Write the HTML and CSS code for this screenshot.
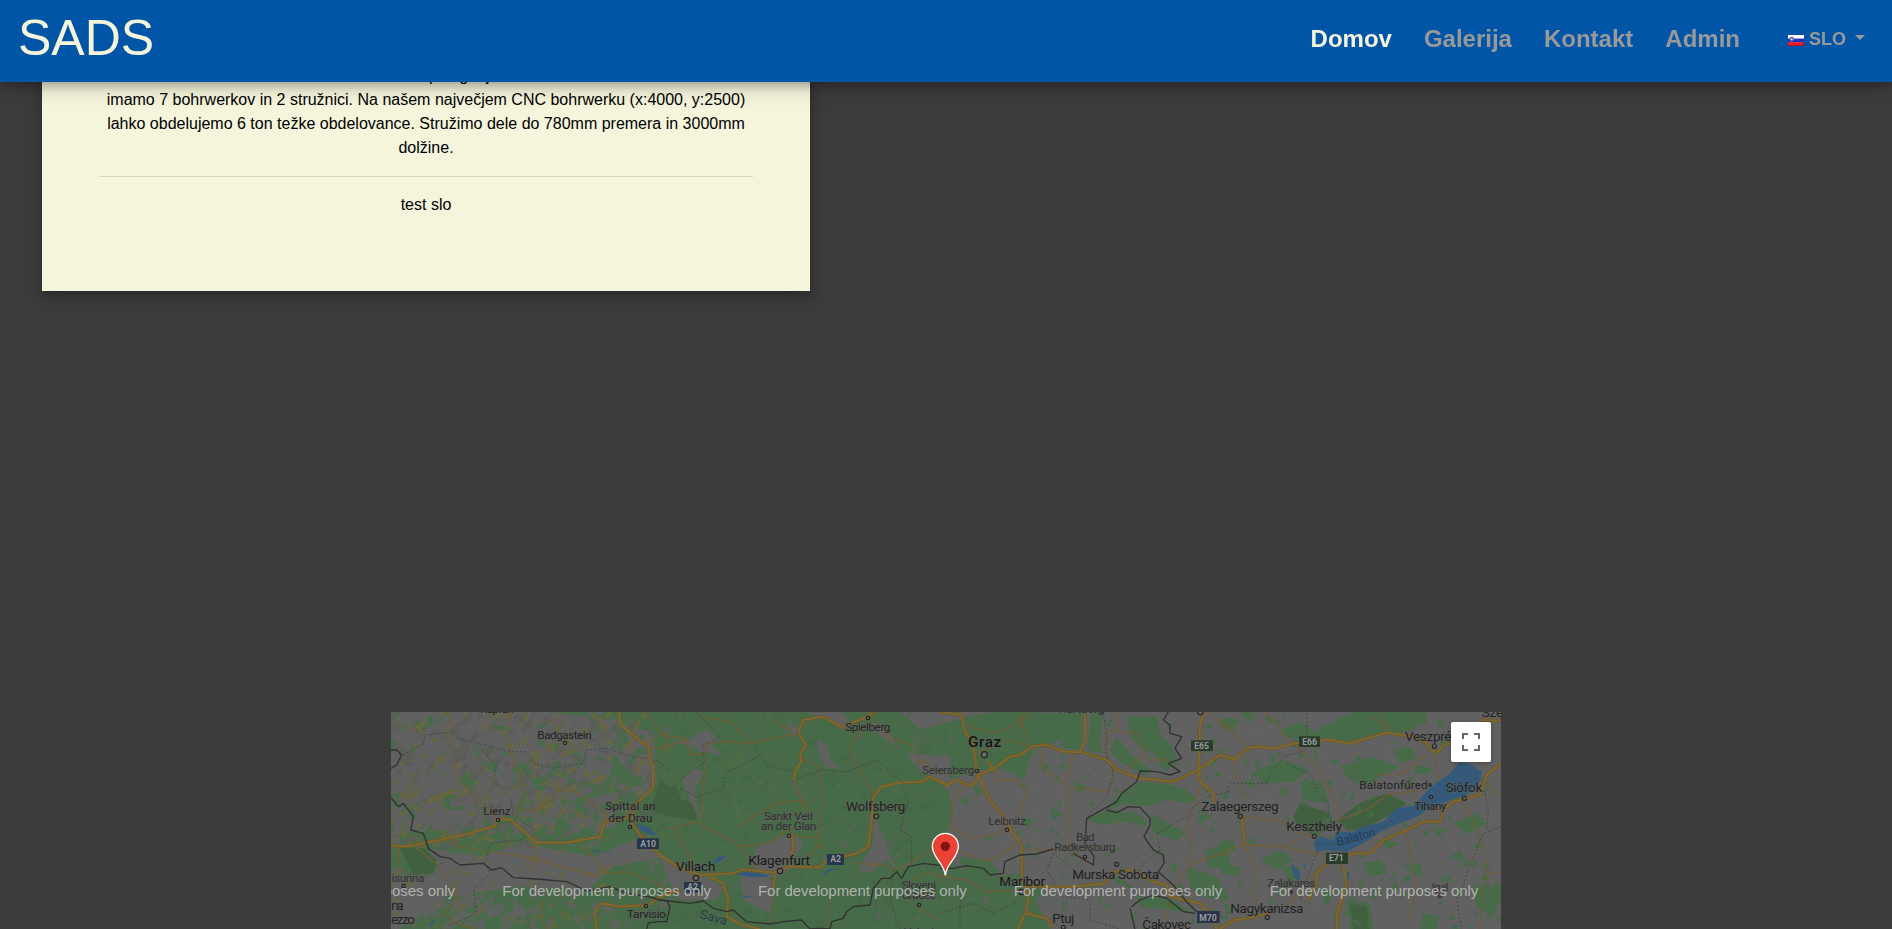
FILE: index.html
```html
<!DOCTYPE html>
<html lang="sl">
<head>
<meta charset="utf-8">
<title>SADS</title>
<link rel="stylesheet" href="styles.css">
</head>
<body>
<header class="navbar">
  <a class="brand">SADS</a>
  <nav class="nav">
    <a class="nav-link active">Domov</a>
    <a class="nav-link">Galerija</a>
    <a class="nav-link">Kontakt</a>
    <a class="nav-link">Admin</a>
    <a class="lang">
      <svg class="flag" width="16" height="11" viewBox="0 0 16 11"><rect width="16" height="11" fill="#fff"/><rect y="3.6" width="16" height="4" fill="#2230b8"/><rect y="7.3" width="16" height="3.7" fill="#f01818"/><path d="M0 10.5h16M15.5 7.5v3" stroke="#a01040" fill="none"/><path d="M2 2h3.4v2.6q-.4 1.3-1.7 1.7q-1.3-.4-1.7-1.7z" fill="#5560c8" stroke="#c08aa8" stroke-width=".5"/><path d="M2.6 5l1.1-1.5L4.8 5z" fill="#fff"/></svg>
      <span>SLO</span><i class="caret"></i>
    </a>
  </nav>
</header>
<main class="page">
  <section class="card">
    <p>Za stranke imamo na razpolaganje velike in nove<br>imamo 7 bohrwerkov in 2 stružnici. Na našem največjem CNC bohrwerku (x:4000, y:2500)<br>lahko obdelujemo 6 ton težke obdelovance. Stružimo dele do 780mm premera in 3000mm<br>dolžine.</p>
    <hr>
    <p>test slo</p>
  </section>
  <section class="map">
    <svg class="map-canvas" viewBox="33 36 3330 651">
      <rect class="land" x="33" y="36" width="3330" height="651"/>
      <g class="forest">
        <path d="M500 36H1560L1620 90L1760 50L1850 36H1980L2060 70L2040 120L1960 150L1930 240L1850 200L1700 240L1720 330L1690 470L1800 550L1960 590L2010 687H60L200 590L420 560L620 570L700 500L860 470L760 420L640 470L420 430L300 470L60 430L60 400L330 380L420 310L540 280L640 240L780 290L830 250L820 100L700 60Z"/>
        <path d="M33 280L140 275L240 265L330 310L240 330L40 320ZM110 205L260 210L290 270L160 235ZM33 430L140 440L190 520L70 540L33 520ZM390 180L520 200L590 240L500 300L420 310ZM640 170L700 165L790 260L730 250Z"/>
        <path d="M1680 500L1780 510L1850 530L1910 520L2000 580L1950 610L1900 687H1680Z"/>
      </g>
      <g class="forest" transform="translate(1680 0)">
        <path d="M320 40L430 36L425 150L370 145L355 90L300 80ZM455 36H490L480 120L490 160L440 150ZM560 50H650L660 100L690 130L715 190L680 210L640 160L610 150L570 110ZM530 110L580 170L640 215L610 225L530 180L510 150ZM600 245L700 255L770 290L750 310L680 300L620 320L560 310L500 330L530 290L560 270ZM440 355L520 330L600 345L625 380L560 365L480 375ZM630 340L740 400L710 420L640 400ZM770 350L800 340L790 380ZM800 450L870 425V510L800 500ZM740 500L830 530L870 600L790 590L750 560ZM690 480L710 500L700 530ZM500 510L570 555L590 570L530 550ZM590 590L700 600L760 640L690 630L600 620ZM280 40L360 50L340 70L300 65ZM60 300L90 285L80 320ZM100 255L130 270L110 290ZM300 185L330 200L310 220ZM240 350L290 360L260 385ZM330 320L370 340L340 360ZM400 240L440 260L410 280ZM60 470L150 480L180 520L120 525L60 500ZM130 405L160 410L150 430Z"/>
      </g>
      <g class="forest" transform="translate(2520 0)">
        <path d="M10 50L60 60L40 90L0 80ZM180 90L240 65L280 95L400 36H550L600 75L560 95L430 110L380 130L330 120L200 115ZM360 200L460 170L540 200L480 230L440 260L390 240ZM100 215L190 180L270 210L220 245L130 250ZM240 245L300 240L330 310L250 300ZM500 40L620 36L620 70L540 80ZM520 150L570 140L590 175L540 190ZM590 195L640 205L620 225L580 220ZM0 430L40 420L50 450L10 460ZM10 490L60 500L50 530L0 520ZM120 480L180 450L220 480L170 510ZM190 500L240 500L230 550L200 540ZM430 490L480 480L500 520L450 530ZM560 500L600 490L610 530L580 520ZM380 600L450 610L460 687H390ZM300 560L340 580L320 620ZM760 570L800 550L843 590L820 650L770 620ZM700 370L770 340L800 370L750 400ZM690 470L720 450L740 490ZM640 380L680 390L650 410ZM490 420L540 430L500 450ZM820 560L843 550V620ZM60 36L110 40L90 70ZM610 640L660 650L650 687H600Z"/>
        <path class="park" d="M240 310L330 340L340 370L290 405L240 390L220 350ZM350 360L420 310L500 280L560 310L520 340L470 365L430 390L380 390ZM390 610L440 620L450 687H400Z"/>
      </g>
      <g id="relief"></g>
      <path class="park" d="M60 440L130 445L170 480L160 520L100 525ZM840 240L870 262L885 255L905 300L930 305L955 330L950 360L870 350L800 330L825 290Z"/>
      <g class="land" transform="translate(840 0)">
        <path d="M65 240L100 205L135 215L105 260L118 360L90 300ZM470 120L500 130L510 180L540 200L500 205L480 170ZM60 130L140 90L180 120L150 130L190 170L120 150ZM290 440L400 400L430 430L380 520L300 540L280 480ZM640 340L665 400L710 510L680 480L625 520L600 500L640 430ZM240 520L340 540L330 640L250 600ZM430 36H550L580 80L540 90L490 50ZM740 160L870 170V280L830 240L780 210ZM620 60L690 100L720 150L640 90ZM0 470L110 520L190 560L170 600L60 600L30 550ZM380 60L420 90L400 110ZM380 230L440 300L420 290Z"/>
      </g>
      <g class="water">
        <path d="M768 372L800 378L832 405L815 405L785 392ZM630 448L700 460L635 453ZM145 680L165 655L158 675ZM288 95L292 94L289 106ZM650 155L670 152L665 158Z"/>
        <path transform="translate(840 0)" d="M225 522L260 515L325 525L320 532L270 532ZM155 492L175 470L200 468L180 485ZM480 530L505 507L535 507L505 515ZM222 573L250 588L295 588L255 593ZM855 540L870 536V541Z"/>
        <path transform="translate(1680 0)" d="M668 261L692 264L690 267ZM340 665L360 680L354 680ZM415 142L428 151Z"/>
        <path transform="translate(2520 0)" d="M280 425L300 410L340 420L350 395L400 395L430 380L490 365L530 325L580 318L610 285L640 255L690 220L718 186L755 195L785 215L780 245L740 285L690 300L630 325L590 350L540 370L480 395L430 430L380 455L310 450L290 455ZM214 490L238 515L240 545L222 530ZM250 490L257 492L254 512ZM381 515L389 518L387 540L381 538ZM763 625L769 655L765 648Z"/>
      </g>
      <g class="lanes">
        <path d="M200 36L225 95L212 130L235 235L300 310L345 350M395 36L378 115L405 190L430 260L428 310L395 350M412 330L465 332L520 300L535 272L580 270L620 295L660 325L680 355M540 36V160M800 36L830 85L862 110L860 150L820 140M190 420L240 440L360 460L470 475L560 505L640 525L740 515L820 545L870 575M465 430L470 480L450 525M480 480L650 530M490 600L480 640L500 687M180 510L235 600L190 640L230 670L280 687M55 440L60 510M110 445L180 500M600 430L620 450L680 520"/>
        <path transform="translate(840 0)" d="M0 105L80 115L90 165L135 160L145 130L180 125L270 130L345 115L410 100M0 145L80 120M270 125L215 65L120 50M340 60L395 95M135 165L130 310L120 365L20 385M120 370L240 440L320 430L400 380M235 435L290 505M230 380L350 310L430 300L450 340M425 175L480 200L488 300L475 435L440 480M400 410L475 412M405 240L435 330M475 435L500 450M655 36L590 110L565 150L640 280M655 65L680 110L770 140L775 190L870 225M340 560L330 687M700 510L760 485L790 460L870 440M580 490L680 495L710 520M510 600L500 687M770 620L830 660M40 385L90 470L100 550M760 540L800 520L870 530M775 180L810 190"/>
        <path transform="translate(1680 0)" d="M85 80L170 100L250 60L270 36M105 160L210 120L270 140L240 50M150 190L170 240L230 240L260 280L230 350M300 150L310 210L375 250L385 300V430L440 490M375 250L400 160M385 260L500 275L520 240L515 190M500 180L505 90L590 100L615 160L560 210M250 36L240 90M25 380L100 415L175 400L210 370M0 430L140 485L230 435M70 250L30 330L35 380M260 450L430 450L480 440M0 530L80 540L140 575L250 570M260 550L350 560M530 36L530 90M620 180L690 180M750 375V500L700 560L670 687M760 490L830 465L870 460M800 36L870 85M780 260L740 380"/>
        <path transform="translate(2520 0)" d="M0 70L75 135M135 36L210 120L300 210L355 330V360L440 330L500 285L600 270M40 180L65 260L75 440L105 500L100 590L140 650M70 350L190 365L240 400L280 408M0 460L60 435L190 440L230 420M190 440L300 465L360 490L380 550L350 687M440 50L500 75V100M480 36L500 90M645 160L650 240M720 300L770 370L780 430L805 520L790 570L780 687M805 520H843M560 390L570 470L590 560L570 660M785 240L843 290M470 225L550 220L620 165M300 500L210 610L140 640"/>
      </g>
      <g class="rural">
        <path d="M780 510L830 470M620 560L580 600M290 540L330 650M410 560L400 660M900 510L870 600M960 60L1000 140M1060 270L1080 380L1220 350M1100 220L1220 300M1300 400L1420 330M1370 260L1450 230M1490 90L1450 160M1550 610L1530 687M1600 110V200M1620 500L1700 560M1900 300L1990 250M1850 320V400M1960 330V470M2010 190L2050 330M2130 400L2220 360M2240 200L2280 330M2350 500L2490 430M2570 300L2700 270M2620 520L2730 570M2770 120L2850 180M2960 440L3100 530M3150 360L3230 450M3000 120L3060 210M3200 100V180M3100 560L3240 610M2840 560L2800 640M1900 350L1880 430M2420 130L2500 180M2590 80L2660 110M3300 340L3363 370M2900 500L2990 640"/>
      </g>
      <g class="trails">
        <path d="M70 165L130 130L135 105L220 95L235 115L300 130L390 155L440 155L460 190L515 205L610 190L620 150L680 145L740 165L840 185L870 220M300 135L330 180L350 190L340 240L390 290L400 345L460 390L420 420L330 430L315 490L330 520L280 570L290 640L200 680M140 520L190 485"/>
        <path transform="translate(840 0)" d="M110 36L180 110L125 140L135 185L60 240M60 265L110 290L190 265L195 220L250 195L300 165L320 195L400 215L405 240L480 210L560 215L650 180L720 240L745 300L720 390L755 410L755 490M700 510L690 600L720 687M640 545L650 630"/>
        <path transform="translate(1680 0)" d="M490 36L500 110L495 150L520 220L500 290L440 350M0 640L100 610L160 640L240 600M870 275L800 290L750 330L740 350L650 400L660 450L610 490L590 530M340 460L320 510L370 590L450 600L450 660L540 687M520 510L570 560M60 580V687M340 460L440 540"/>
        <path transform="translate(2520 0)" d="M262 40L258 150L190 170L150 220L140 250L30 250L20 280M200 190L275 225L290 280L325 310V340M290 455L265 530L240 600L270 610M843 380L790 400L740 520L730 560L710 600L725 687M785 235L805 330L800 390M290 430L340 435L420 420L510 365L600 325L780 230"/>
      </g>
      <g id="roads">
        <g class="road-edge">
          <path d="M33 436L80 440L250 405L345 378L352 358H390L470 428L560 428L660 410L675 365L740 355M717 36L722 75L808 145L808 175L820 200L818 265L765 315L755 370L800 430L870 488M650 687L645 635L665 610L720 620L805 615L840 590L900 570"/>
          <path transform="translate(840 0)" d="M0 465L60 505L120 525L220 520L250 508L340 518L390 500L480 502L500 482L590 460L625 440L635 360L640 290L665 260L720 248L790 245L808 230L840 245L870 258M150 530L190 550L205 600L200 650L240 672L300 687M345 525L340 560M395 400L400 440L385 500M415 95L430 60L490 50L545 82L620 50L640 36M415 100L438 135L420 160L423 185L405 215L402 240"/>
          <path transform="translate(1680 0)" d="M0 36L65 45L75 95L100 130L110 215L150 300L190 350L245 440L245 520L265 590L260 630L235 687M0 240L20 255L50 240L95 258L118 225L170 200L210 170L240 165L280 138L320 135L370 155L420 157L435 120V36M425 157L500 180L530 210L600 235L700 245L770 212L840 165L870 175M145 185L165 215M790 36L780 80L775 210L780 245L820 280L825 310M260 640L320 655L340 680M250 560L400 560L490 550L525 515L580 510L640 545L680 555L690 590L780 610L820 650L830 687"/>
          <path transform="translate(2520 0)" d="M0 165L45 178L80 145L110 140L160 145L225 130L270 130L320 118L390 130L500 98L580 110L620 130L640 155L655 155L670 135L690 130M0 687L40 660L80 655L150 640M265 600L290 550V520L320 490L400 460L450 460L490 420L560 390L610 365L660 365L670 330L700 305L780 285L800 225L843 190M370 500L380 550L350 640V687M65 350L75 440M780 60L843 62"/>
        </g>
      </g>
      <g class="borders">
        <path d="M33 150L50 150L65 165L50 195L33 205M33 293L55 320L70 310L100 350L92 390L130 400L145 445L180 470L210 475L240 495L310 490L335 510L365 503L400 533L470 537L560 545L620 573L690 560L740 580L805 590L840 600L870 603"/>
        <path transform="translate(840 0)" d="M0 600L90 610L130 603L160 625L200 635L220 630L260 665L330 672L370 665L425 660L450 687L480 685L510 687L515 665L550 655L560 635L580 620L630 615L640 565L665 535L690 535L710 515L725 535L745 500L790 490L870 500M-40 687L-35 668L0 665L20 665L30 620L20 603"/>
        <path transform="translate(1680 0)" d="M0 505L40 505L80 497L130 505L150 525L190 520L195 485L240 465L290 462L340 447M685 36L670 60L690 75V100L725 110L705 145L725 175L685 190L720 215L690 225L650 215L600 213L590 245L545 280L530 305L440 355L435 430L462 470L460 495L400 460M500 330L530 338L565 320L600 322L630 355V375L612 410L640 450L670 465L672 490L655 515L700 555L735 600L770 635M575 620L600 600L640 585L680 595L730 635L765 640M585 687L570 625"/>
      </g>
      <g class="dots">
        <circle cx="555" cy="129" r="5"/><circle cx="354" cy="360" r="5"/><circle cx="750" cy="381" r="5"/><circle cx="71" cy="558" r="5"/><circle cx="798" cy="618" r="5"/>
        <circle cx="1464" cy="54" r="5"/><circle cx="1489" cy="349" r="7"/><circle cx="1227" cy="407" r="5"/><circle cx="1200" cy="513" r="8"/><circle cx="948" cy="534" r="8"/><circle cx="1617" cy="615" r="5"/>
        <circle cx="1813" cy="164" r="9"/><circle cx="1791" cy="213" r="5"/><circle cx="1881" cy="390" r="5"/><circle cx="2115" cy="471" r="5"/><circle cx="2210" cy="493" r="6"/><circle cx="1925" cy="576" r="8"/><circle cx="2050" cy="682" r="6"/><circle cx="2165" cy="36" r="6"/><circle cx="2461" cy="36" r="8"/>
        <circle cx="3163" cy="139" r="6"/><circle cx="3150" cy="255" r="4"/><circle cx="3153" cy="291" r="5"/><circle cx="3253" cy="295" r="6"/><circle cx="2581" cy="349" r="6"/><circle cx="2803" cy="409" r="6"/><circle cx="2733" cy="576" r="4"/><circle cx="3180" cy="588" r="5"/><circle cx="2662" cy="652" r="6"/>
      </g>
      <g class="labels small">
        <text x="300" y="38" textLength="101">Kaprun</text>
        <text x="472" y="116" textLength="163">Badgastein</text>
        <text x="310" y="344" textLength="82">Lienz</text>
        <text x="676" y="329" textLength="150">Spittal an</text><text x="685" y="365" textLength="132">der Drau</text>
        <text x="35" y="545" textLength="98" class="dim">isurina</text>
        <text x="741" y="653" textLength="117">Tarvisio</text>
        <text x="1396" y="92" textLength="135">Spielberg</text>
        <text x="1627" y="223" textLength="156" class="dim">Seiersberg</text>
        <text x="1152" y="359" textLength="148" class="dim">Sankt Veit</text><text x="1143" y="391" textLength="166" class="dim">an der Glan</text>
        <text x="1565" y="566" textLength="103" class="dim">Slovenj</text><text x="1565" y="598" textLength="103" class="dim">Gradec</text>
        <text x="1572" y="707" textLength="108" class="dim">Velenje</text>
        <text x="1825" y="374" textLength="113" class="dim">Leibnitz</text>
        <text x="2088" y="422" textLength="56" class="dim">Bad</text><text x="2023" y="454" textLength="183" class="dim">Radkersburg</text>
        <text x="2035" y="38" textLength="138" class="dim">Hartberg</text>
        <text x="2938" y="267" textLength="205">Balatonfüred</text>
        <text x="3103" y="329" textLength="96">Tihany</text>
        <text x="2662" y="562" textLength="144" class="dim">Zalakaros</text>
        <text x="3155" y="574" textLength="50" class="dim">Igal</text>
        <text class="river" transform="translate(957 653) rotate(16)" textLength="84">Sava</text>
        <text class="lake" transform="translate(2873 439) rotate(-16)" textLength="120">Balaton</text>
      </g>
      <g class="labels medium">
        <text x="33" y="630" textLength="38">na</text><text x="33" y="671" textLength="72">ezzo</text>
        <text x="1398" y="332" textLength="178">Wolfsberg</text>
        <text x="888" y="514" textLength="118" class="city">Villach</text>
        <text x="1105" y="495" textLength="185" class="city">Klagenfurt</text>
        <text x="1858" y="557" textLength="137" class="city">Maribor</text>
        <text x="2077" y="538" textLength="260">Murska Sobota</text>
        <text x="2017" y="668" textLength="66">Ptuj</text>
        <text x="2287" y="688" textLength="146">Čakovec</text>
        <text x="2464" y="332" textLength="232">Zalaegerszeg</text>
        <text x="3075" y="122" textLength="174">Veszprém</text>
        <text x="3197" y="277" textLength="110">Siófok</text>
        <text x="2719" y="392" textLength="167">Keszthely</text>
        <text x="2551" y="638" textLength="219">Nagykanizsa</text>
        <text x="3305" y="52" textLength="125">Székes</text>
      </g>
      <text class="labels graz" x="1764" y="142" textLength="100">Graz</text>
      <g class="shields">
        <rect x="771" y="415" width="66" height="32"/><text x="804" y="440">A10</text>
        <rect x="912" y="546" width="52" height="32"/><text x="938" y="571">A2</text>
        <rect x="1341" y="462" width="51" height="33"/><text x="1367" y="487">A2</text>
        <rect x="2451" y="633" width="68" height="36"/><text x="2484" y="662">M70</text>
        <rect class="e" x="2433" y="121" width="66" height="32"/><text x="2465" y="146">E65</text>
        <rect class="e" x="2757" y="109" width="63" height="32"/><text x="2789" y="134">E66</text>
        <rect class="e" x="2838" y="458" width="66" height="34"/><text x="2869" y="483">E71</text>
      </g>
      <g class="watermark">
        <text x="-401" y="588" textLength="626">For development purposes only</text>
        <text x="367" y="588" textLength="626">For development purposes only</text>
        <text x="1134" y="588" textLength="626">For development purposes only</text>
        <text x="1901" y="588" textLength="626">For development purposes only</text>
        <text x="2669" y="588" textLength="626">For development purposes only</text>
      </g>
      <path class="pin" d="M1696 526C1692 488 1657 474 1657 439A39 39 0 0 1 1735 439C1735 474 1700 488 1696 526Z"/>
      <circle class="pin-hole" cx="1696" cy="439" r="14"/>
    </svg>
    <button class="fullscreen" aria-label="Fullscreen"><svg width="18" height="18" viewBox="0 0 18 18"><path d="M1 6V1h5M12 1h5v5M17 12v5h-5M6 17H1v-5" fill="none" stroke="#666" stroke-width="2"/></svg></button>
  </section>
</main>
<script src="map.js"></script>
</body>
</html>
```

FILE: styles.css
```css
* { box-sizing: border-box; }
body { margin: 0; background: #3c3c3c; font: 16px/24px "Liberation Sans", Arial, sans-serif; color: #000; overflow: hidden; }
.navbar { position: fixed; z-index: 5; top: 0; left: 0; right: 0; height: 82px; padding: 0 27px 0 18px; display: flex; justify-content: space-between; background: #0055a7; box-shadow: 0 4px 8px rgba(0, 0, 0, .2), 0 6px 20px rgba(0, 0, 0, .19); }
.brand { font-size: 50px; line-height: 77px; color: #f5f5dc; }
.nav { display: flex; height: 77px; align-items: center; gap: 32px; font-weight: 700; font-size: 24px; color: #999; }
.active { color: #f5f5dc; }
.lang { display: flex; align-items: center; margin-left: 16px; font-size: 18px; }
.flag { margin: 3px 5px 0 0; }
.caret { margin: -3px 0 0 9px; border: 5.4px solid transparent; border-top-color: #999; border-bottom: 0; }
.page { height: 929px; overflow: hidden; }
.card { width: 768px; height: 291px; margin-left: 42px; padding: 64px 57px 0; background: #f5f5dc; text-align: center; box-shadow: 0 4px 8px rgba(0, 0, 0, .2), 0 6px 20px rgba(0, 0, 0, .19); white-space: nowrap; }
.card p { margin: 0 0 16px; }
.card hr { margin: 16px 0; border: 0; border-top: 1px solid rgba(0, 0, 0, .12); }
.map { position: relative; width: 1110px; height: 217px; margin: 421px auto 0; overflow: hidden; }
.map-canvas { display: block; width: 1110px; height: 217px; font-family: Roboto, sans-serif; }
.land { fill: #616161; }
.forest { fill: #476b48; }
.park { fill: #41603f; }
.water { fill: #34597b; }
.lanes { fill: none; stroke: #705d38; stroke-width: 4; stroke-linejoin: round; }
.rural { fill: none; stroke: #6b6d69; stroke-width: 2; opacity: .65; }
.road-edge { fill: none; stroke: #6b5a2e; stroke-width: 10; stroke-linejoin: round; }
.road-fill { fill: none; stroke: #80692e; stroke-width: 5; stroke-linejoin: round; }
.trails { fill: none; stroke: #424743; stroke-width: 3; stroke-dasharray: 6 6; }
.borders { fill: none; stroke: #303130; stroke-width: 4; stroke-linejoin: round; }
.dots { fill: #696969; stroke: #242424; stroke-width: 3.5; }
.labels { fill: #222; stroke: #626262; stroke-opacity: .6; stroke-width: 4; paint-order: stroke; }
.small { font-size: 35px; }
.medium { font-size: 40.5px; }
.dim { fill: #303030; }
.city { fill: #171717; }
.graz { font-size: 46px; font-weight: 500; fill: #151515; }
.river { font-size: 38px; fill: #293b49; stroke: none; }
.lake { font-size: 36px; fill: #203f59; stroke: none; }
.shields { font-size: 26px; font-weight: 700; text-anchor: middle; fill: #979a9c; }
.shields rect { fill: #27344a; }
.shields .e { fill: #2b3b2b; }
.watermark { font-family: "Liberation Sans", Arial, sans-serif; font-size: 45px; fill: #b0b2b0; }
.pin { fill: #ea4335; stroke: #fff; stroke-width: 4; }
.pin-hole { fill: #811411; }
.fullscreen { position: absolute; top: 10px; right: 10px; width: 40px; height: 40px; padding: 0; border: 0; border-radius: 2px; background: #fff; display: grid; place-items: center; box-shadow: 0 1px 4px rgba(0, 0, 0, .3); }
```

FILE: map.js
```js
// Hill shading and scattered woodland, drawn as small irregular facets.
const NS = 'http://www.w3.org/2000/svg';
const relief = document.getElementById('relief');
let seed = 7;
const rnd = () => (seed = (seed * 16807) % 2147483647) / 2147483647;
function facets(count, x0, x1, y0, y1, length, width, color, opacity) {
  let d = '';
  for (let i = 0; i < count; i++) {
    const x = x0 + rnd() * (x1 - x0), y = y0 + rnd() * (y1 - y0);
    const a = (rnd() < 0.75 ? -0.8 : 0.7) + (rnd() - 0.5) * 0.9;
    const l = length * (0.4 + rnd()), w = width * (0.4 + rnd());
    const c = Math.cos(a), s = Math.sin(a);
    const pt = (u, v) => (x + u * c - v * s).toFixed(0) + ' ' + (y + u * s + v * c).toFixed(0);
    d += 'M' + pt(-l / 2, 0) + 'L' + pt(-l * 0.1, -w / 2) + 'L' + pt(l / 2, -w * 0.2) + 'L' + pt(l * 0.15, w / 2) + 'Z';
  }
  const p = document.createElementNS(NS, 'path');
  p.setAttribute('d', d);
  p.setAttribute('fill', color);
  p.setAttribute('opacity', opacity);
  relief.appendChild(p);
}
facets(190, 33, 800, 36, 420, 64, 22, '#476b48', 0.9);
facets(330, 33, 700, 36, 400, 56, 28, '#616161', 0.95);
facets(60, 33, 330, 100, 300, 80, 40, '#616161', 0.9);
facets(150, 33, 820, 36, 430, 46, 16, '#68683f', 0.8);
facets(130, 33, 820, 36, 440, 46, 18, '#5a5b59', 0.7);
facets(110, 33, 860, 430, 687, 46, 18, '#5f615f', 0.85);
facets(60, 33, 420, 470, 687, 56, 28, '#606160', 0.85);
facets(70, 33, 700, 430, 687, 40, 14, '#666740', 0.7);
facets(90, 830, 1300, 36, 400, 38, 14, '#566b3f', 0.5);
facets(110, 830, 1700, 36, 687, 44, 18, '#406242', 0.4);
facets(60, 830, 1900, 36, 687, 34, 14, '#5f625f', 0.75);
facets(110, 1900, 2560, 60, 687, 22, 14, '#476b48', 0.9);
facets(140, 2480, 3363, 50, 687, 26, 18, '#476b48', 0.9);

// Main roads get a lighter centre line over their casing.
const roads = document.getElementById('roads');
const fill = roads.firstElementChild.cloneNode(true);
fill.setAttribute('class', 'road-fill');
roads.appendChild(fill);
```
